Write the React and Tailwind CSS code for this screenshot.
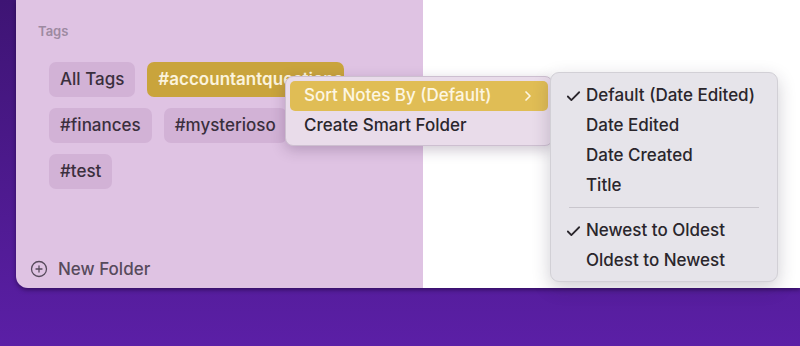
import { CirclePlus, ChevronRight, Check } from "lucide-react";

const tagsRow = [
  [{ label: "All Tags" }, { label: "#accountantquestions", active: true }],
  [{ label: "#finances" }, { label: "#mysterioso" }],
  [{ label: "#test" }],
];

const sortItems = [
  { label: "Default (Date Edited)", checked: true },
  { label: "Date Edited" },
  { label: "Date Created" },
  { label: "Title" },
];

const orderItems = [
  { label: "Newest to Oldest", checked: true },
  { label: "Oldest to Newest" },
];

function Tag({ label, active }) {
  if (active) {
    return (
      <div className="h-[35px] w-[197px] overflow-hidden whitespace-nowrap rounded-[7px] bg-[#c9a43c] pl-[11px] text-[17px] font-semibold leading-[35px] text-[#fbf3dc]">
        {label}
      </div>
    );
  }
  return (
    <div className="h-[35px] rounded-[7px] bg-[#d2b2d6] px-[11px] text-[17px] font-medium leading-[35px] text-[#3a2f3d]">
      {label}
    </div>
  );
}

function SubItem({ label, checked }) {
  return (
    <div className="flex h-[30px] items-center text-[17px] font-medium text-[#2a262c]">
      <span className="flex w-[35px] justify-end pr-[4px]">
        {checked && <Check size={17} strokeWidth={2.5} />}
      </span>
      <span>{label}</span>
    </div>
  );
}

export default function App() {
  return (
    <div
      className="relative h-[346px] w-[800px] overflow-hidden bg-gradient-to-b from-[#3e1474] to-[#5b1fa6]"
      style={{ fontFamily: "Inter, 'Open Sans', sans-serif" }}
    >
      <div className="ml-[16px] flex h-[288px] overflow-hidden rounded-bl-[12px] shadow-[0_2px_4px_rgba(20,0,40,0.5)]">
        <div className="flex w-[407px] flex-col bg-[#dfc3e3]">
          <div className="pl-[22px] pt-[22px] text-[13px] font-semibold text-[#9d8aa1]">Tags</div>
          <div className="mt-[20px] flex flex-col gap-[11px] pl-[33px]">
            {tagsRow.map((row, i) => (
              <div key={i} className="flex gap-[12px]">
                {row.map((t) => (
                  <Tag key={t.label} {...t} />
                ))}
              </div>
            ))}
          </div>
          <div className="mt-auto mb-[6px] flex items-center gap-[10px] pl-[14px] text-[17px] font-medium text-[#574a5c]">
            <CirclePlus size={18} strokeWidth={1.7} />
            <span>New Folder</span>
          </div>
        </div>
        <div className="flex-1 bg-white" />
      </div>

      {/* context menu */}
      <div className="absolute left-[285px] top-[76px] w-[268px] rounded-[8px] border border-[#cdbfd0] bg-[#e9dcea] p-[4px] shadow-[0_4px_14px_rgba(60,30,70,0.25)]">
        <div className="flex h-[30px] items-center justify-between rounded-[5px] bg-[#e0bd55] pl-[14px] pr-[12px] text-[17px] font-medium text-[#fdf6e2]">
          <span>Sort Notes By (Default)</span>
          <ChevronRight size={16} strokeWidth={2.5} />
        </div>
        <div className="flex h-[30px] items-center pl-[14px] text-[17px] font-medium text-[#2a262c]">Create Smart Folder</div>
      </div>

      {/* submenu */}
      <div className="absolute left-[550px] top-[72px] w-[228px] rounded-[9px] border border-[#d2d0d6] bg-[#e6e4ea] pt-[8px] pb-[5px] shadow-[0_6px_18px_rgba(40,30,60,0.22)]">
        {sortItems.map((it) => (
          <SubItem key={it.label} {...it} />
        ))}
        <div className="mx-[18px] mt-[6px] mb-[8px] h-px bg-[#c9c6cd]" />
        {orderItems.map((it) => (
          <SubItem key={it.label} {...it} />
        ))}
      </div>
    </div>
  );
}
